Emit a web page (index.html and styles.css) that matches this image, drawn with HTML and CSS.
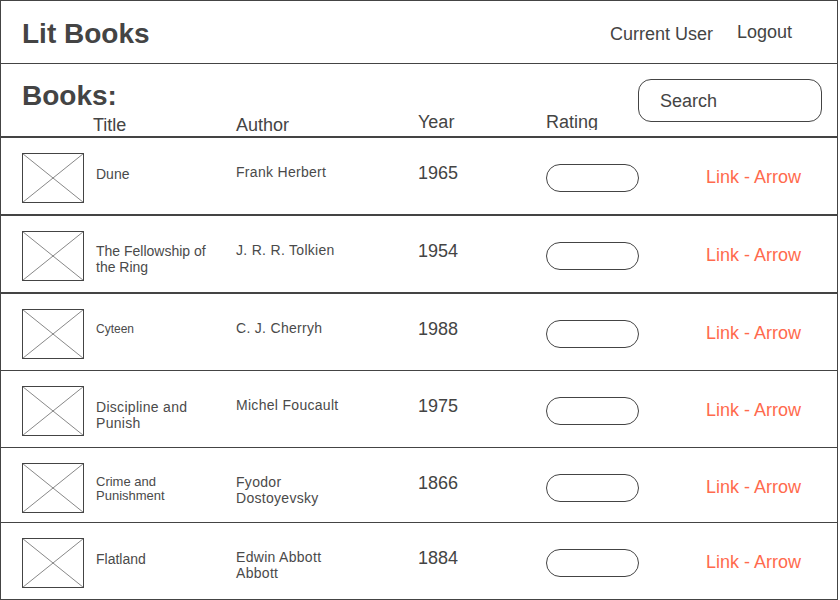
FILE: index.html
```html
<!DOCTYPE html>
<html lang="en">
<head>
<meta charset="utf-8">
<title>Lit Books</title>
<link rel="stylesheet" href="styles.css">
</head>
<body>
<div class="app">
  <header class="topbar">
    <div class="brand">Lit Books</div>
    <nav class="nav">
      <span class="nav-item">Current User</span>
      <span class="nav-item nav-logout">Logout</span>
    </nav>
  </header>
  <section class="list-head">
    <h1 class="list-title">Books:</h1>
    <span class="label label-title">Title</span>
    <span class="label label-author">Author</span>
    <span class="label label-year">Year</span>
    <span class="label label-rating">Rating</span>
    <div class="search">Search</div>
  </section>
  <div class="row row-thick">
    <svg class="ph" viewBox="0 0 62 50" width="62" height="50"><rect x="0.5" y="0.5" width="61" height="49" fill="none" stroke="#444"/><path d="M0.5 0.5L61.5 49.5M61.5 0.5L0.5 49.5" stroke="#555" stroke-width="0.7" fill="none"/></svg>
    <div class="title t-low">Dune</div>
    <div class="author">Frank Herbert</div>
    <div class="year">1965</div>
    <div class="pill"></div>
    <a class="link">Link - Arrow</a>
  </div>
  <div class="row row-thick">
    <svg class="ph" viewBox="0 0 62 50" width="62" height="50"><rect x="0.5" y="0.5" width="61" height="49" fill="none" stroke="#444"/><path d="M0.5 0.5L61.5 49.5M61.5 0.5L0.5 49.5" stroke="#555" stroke-width="0.7" fill="none"/></svg>
    <div class="title t-two">The Fellowship of the Ring</div>
    <div class="author">J. R. R. Tolkien</div>
    <div class="year">1954</div>
    <div class="pill"></div>
    <a class="link">Link - Arrow</a>
  </div>
  <div class="row">
    <svg class="ph" viewBox="0 0 62 50" width="62" height="50"><rect x="0.5" y="0.5" width="61" height="49" fill="none" stroke="#444"/><path d="M0.5 0.5L61.5 49.5M61.5 0.5L0.5 49.5" stroke="#555" stroke-width="0.7" fill="none"/></svg>
    <div class="title t-small">Cyteen</div>
    <div class="author">C. J. Cherryh</div>
    <div class="year">1988</div>
    <div class="pill"></div>
    <a class="link">Link - Arrow</a>
  </div>
  <div class="row">
    <svg class="ph" viewBox="0 0 62 50" width="62" height="50"><rect x="0.5" y="0.5" width="61" height="49" fill="none" stroke="#444"/><path d="M0.5 0.5L61.5 49.5M61.5 0.5L0.5 49.5" stroke="#555" stroke-width="0.7" fill="none"/></svg>
    <div class="title t-low t-spaced">Discipline and Punish</div>
    <div class="author">Michel Foucault</div>
    <div class="year">1975</div>
    <div class="pill"></div>
    <a class="link">Link - Arrow</a>
  </div>
  <div class="row row-short">
    <svg class="ph" viewBox="0 0 62 50" width="62" height="50"><rect x="0.5" y="0.5" width="61" height="49" fill="none" stroke="#444"/><path d="M0.5 0.5L61.5 49.5M61.5 0.5L0.5 49.5" stroke="#555" stroke-width="0.7" fill="none"/></svg>
    <div class="title t-mid">Crime and Punishment</div>
    <div class="author">Fyodor Dostoyevsky</div>
    <div class="year">1866</div>
    <div class="pill"></div>
    <a class="link">Link - Arrow</a>
  </div>
  <div class="row row-last">
    <svg class="ph" viewBox="0 0 62 50" width="62" height="50"><rect x="0.5" y="0.5" width="61" height="49" fill="none" stroke="#444"/><path d="M0.5 0.5L61.5 49.5M61.5 0.5L0.5 49.5" stroke="#555" stroke-width="0.7" fill="none"/></svg>
    <div class="title t-low">Flatland</div>
    <div class="author">Edwin Abbott Abbott</div>
    <div class="year">1884</div>
    <div class="pill"></div>
    <a class="link">Link - Arrow</a>
  </div>
</div>
</body>
</html>
```
FILE: styles.css
```css
* { box-sizing: border-box; }
html, body { margin: 0; padding: 0; background: #fff; }
body {
  font-family: "Liberation Sans", Arial, sans-serif;
  color: #444;
}
.app {
  width: 838px;
  height: 600px;
  border: 1px solid #444;
  display: flex;
  flex-direction: column;
}
.topbar {
  height: 63px;
  border-bottom: 1px solid #444;
  display: flex;
  align-items: center;
  justify-content: space-between;
  padding: 4px 45px 0 21px;
}
.brand {
  font-size: 28px;
  font-weight: bold;
  line-height: 32px;
  color: #444;
}
.nav { display: flex; gap: 24px; align-items: flex-start; }
.nav-item { font-size: 18px; line-height: 20px; }
.nav-logout { margin-top: -2px; }

.list-head {
  height: 74px;
  border-bottom: 2px solid #444;
  display: grid;
  grid-template-columns: 71px 143px 182px 128px 92px 184px;
  grid-template-rows: 32px auto;
  padding: 16px 0 0 21px;
}
.list-title {
  grid-column: 1 / 5;
  grid-row: 1;
  margin: 0;
  font-size: 28px;
  line-height: 32px;
  font-weight: bold;
  color: #444;
}
.label {
  grid-row: 2;
  font-size: 18px;
  line-height: 20px;
  align-self: start;
}
.label-title { grid-column: 2; margin-top: 3px; }
.label-author { grid-column: 3; margin-top: 3px; }
.label-year { grid-column: 4; margin-top: 0; }
.label-rating { grid-column: 5; margin-top: 0; height: 18px; overflow: hidden; }
.search {
  grid-column: 6;
  grid-row: 1 / 3;
  align-self: start;
  margin-top: -1px;
  height: 43px;
  border: 1px solid #444;
  border-radius: 13px;
  font-size: 18px;
  line-height: 43px;
  padding-left: 21px;
}

.row {
  height: 77px;
  border-bottom: 1px solid #444;
  display: grid;
  grid-template-columns: 74px 140px 182px 128px 160px 1fr;
  align-items: start;
  padding: 15px 0 0 21px;
  color: #4a4a4a;
}
.row-thick { height: 78px; border-bottom-width: 2px; }
.row-short { height: 75px; }
.row-last { height: 76px; border-bottom: 0; }
.ph { display: block; }
.title {
  font-size: 14px;
  line-height: 16px;
  margin-top: 11px;
  padding-right: 8px;
}
.t-low { margin-top: 13px; }
.t-two { margin-top: 12px; }
.t-spaced { letter-spacing: 0.3px; padding-right: 20px; }
.t-small { font-size: 12px; line-height: 14px; margin-top: 13px; }
.t-mid { font-size: 13px; line-height: 14px; margin-top: 12px; padding-right: 30px; }
.author {
  font-size: 14px;
  line-height: 16px;
  letter-spacing: 0.3px;
  margin-top: 11px;
  padding-right: 60px;
}
.year {
  font-size: 18px;
  line-height: 20px;
  margin-top: 10px;
  color: #444;
}
.pill {
  width: 93px;
  height: 28px;
  border: 1px solid #444;
  border-radius: 14px;
  margin-top: 11px;
}
.link {
  font-size: 18px;
  line-height: 20px;
  margin-top: 14px;
  color: #ff6a4d;
  text-decoration: none;
}
```
